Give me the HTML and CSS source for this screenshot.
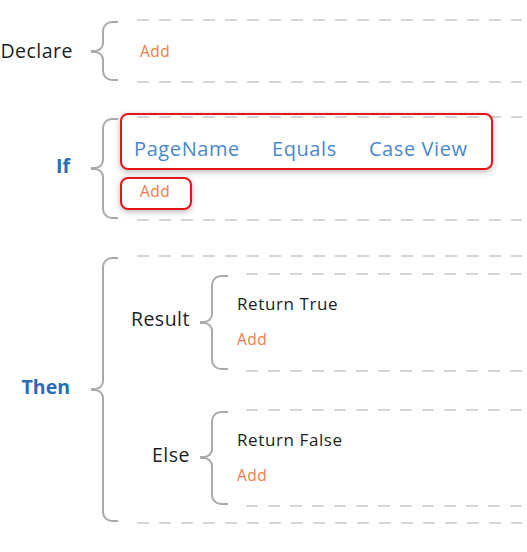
FILE: index.html
```html
<!DOCTYPE html>
<html>
<head>
<meta charset="utf-8">
<link rel="stylesheet" href="styles.css">
</head>
<body>
<div class="page">
  <section class="block declare">
    <div class="label">Declare</div>
    <div class="brace"><span class="arm top"></span><span class="tip up"></span><span class="tip down"></span><span class="arm bottom"></span></div>
    <div class="content dashed">
      <span class="add">Add</span>
    </div>
  </section>

  <section class="block cond">
    <div class="label key">If</div>
    <div class="brace"><span class="arm top"></span><span class="tip up"></span><span class="tip down"></span><span class="arm bottom"></span></div>
    <div class="content dashed cond-content">
      <div class="highlight expr">
        <span class="term">PageName</span>
        <span class="term">Equals</span>
        <span class="term">Case View</span>
      </div>
      <div class="highlight add-box"><span class="add">Add</span></div>
    </div>
  </section>

  <section class="block then">
    <div class="label key">Then</div>
    <div class="brace"><span class="arm top"></span><span class="tip up"></span><span class="tip down"></span><span class="arm bottom"></span></div>
    <div class="content dashed then-content">
      <section class="sub">
        <div class="sublabel">Result</div>
        <div class="brace"><span class="arm top"></span><span class="tip up"></span><span class="tip down"></span><span class="arm bottom"></span></div>
        <div class="subcontent dashed inner">
          <span class="stmt">Return True</span>
          <span class="add">Add</span>
        </div>
      </section>
      <section class="sub">
        <div class="sublabel">Else</div>
        <div class="brace"><span class="arm top"></span><span class="tip up"></span><span class="tip down"></span><span class="arm bottom"></span></div>
        <div class="subcontent dashed inner">
          <span class="stmt">Return False</span>
          <span class="add">Add</span>
        </div>
      </section>
    </div>
  </section>
</div>
</body>
</html>
```

FILE: styles.css
```css
html, body {
  margin: 0;
  padding: 0;
  background: #ffffff;
}

body {
  font-family: "Open Sans", "Liberation Sans", sans-serif;
  color: #1e1e1e;
}

.page {
  padding: 19px 5px 0 0;
  display: flex;
  flex-direction: column;
  gap: 33px;
}

.page > .then { margin-top: 1px; }

.block {
  display: grid;
  grid-template-columns: 72px 27px 1fr;
  column-gap: 19px;
  align-items: stretch;
}

.label {
  align-self: center;
  justify-self: end;
  text-align: right;
  font-size: 19.5px;
  line-height: 24px;
  white-space: nowrap;
  letter-spacing: 0.5px;
}

.label.key {
  color: #2d6cb3;
  font-weight: 700;
  letter-spacing: 0;
  padding-right: 2px;
}

.declare .label { margin-top: -1px; margin-right: -1px; }
.cond .label { margin-top: -6px; }
.then .label { margin-top: -6px; }

/* Curly brace */
.brace {
  display: flex;
  flex-direction: column;
  padding: 2px 0;
}

.arm {
  flex: 1;
  margin-left: 11px;
  border-left: 2px solid #a9a9a9;
}

.arm.top {
  border-top: 2px solid #a9a9a9;
  border-top-left-radius: 10px;
}

.arm.bottom {
  border-bottom: 2px solid #a9a9a9;
  border-bottom-left-radius: 10px;
}

.tip {
  width: 13px;
  height: 9px;
  box-sizing: border-box;
  border-right: 2px solid #a9a9a9;
}

.tip.up {
  border-bottom: 2px solid #a9a9a9;
  border-bottom-right-radius: 9px;
  margin-bottom: -1px;
}

.tip.down {
  border-top: 2px solid #a9a9a9;
  border-top-right-radius: 9px;
}

/* Dashed rules at top and bottom */
.dashed {
  background-image:
    linear-gradient(90deg, #d5d5d5 12px, transparent 12px),
    linear-gradient(90deg, #d5d5d5 12px, transparent 12px);
  background-size: 22px 2px, 22px 2px;
  background-repeat: repeat-x, repeat-x;
  background-position: 0 0, 0 100%;
}

.content {
  min-width: 0;
}

.declare .content {
  height: 64px;
  display: flex;
  align-items: center;
  padding-left: 3px;
}

.add {
  color: #f27a47;
  font-size: 15.5px;
  line-height: 20px;
  letter-spacing: 0.5px;
}

.cond-content {
  height: 105px;
  box-sizing: border-box;
  display: flex;
  flex-direction: column;
  align-items: flex-start;
}

.highlight {
  border: 2px solid #e8141b;
  border-radius: 8px;
  box-shadow: 0 2px 6px rgba(0, 0, 0, 0.28);
  box-sizing: border-box;
  margin-left: -17px;
}

.expr {
  margin-top: -3px;
  width: 373px;
  height: 57px;
  display: flex;
  align-items: center;
  gap: 32px;
  padding: 14px 0 0 12px;
}

.term {
  color: #4a88cc;
  font-size: 20px;
  line-height: 26px;
  letter-spacing: 0.6px;
  white-space: nowrap;
}

.add-box {
  margin-top: 7px;
  width: 72px;
  height: 33px;
  display: flex;
  align-items: center;
  padding: 0 0 5px 18px;
}

.then-content {
  height: 269px;
  box-sizing: border-box;
  padding: 18px 0 17px 0;
  display: flex;
  flex-direction: column;
  gap: 37px;
}

.sub {
  flex: 1;
  display: grid;
  grid-template-columns: 53px 27px 1fr;
  column-gap: 10px;
}

.sub .brace {
  margin-right: -1px;
}

.sublabel {
  align-self: center;
  justify-self: end;
  text-align: right;
  font-size: 19.5px;
  line-height: 24px;
  letter-spacing: 0.5px;
  white-space: nowrap;
  margin-top: -6px;
}

.subcontent {
  display: flex;
  flex-direction: column;
  align-items: flex-start;
  padding: 19px 0 0 0;
  gap: 11px;
  background-position: 9px 0, 9px 100%;
}

.stmt {
  font-size: 17px;
  line-height: 24px;
  letter-spacing: 0.6px;
  color: #1e1e1e;
}

.subcontent .add {
  line-height: 24px;
}
```
